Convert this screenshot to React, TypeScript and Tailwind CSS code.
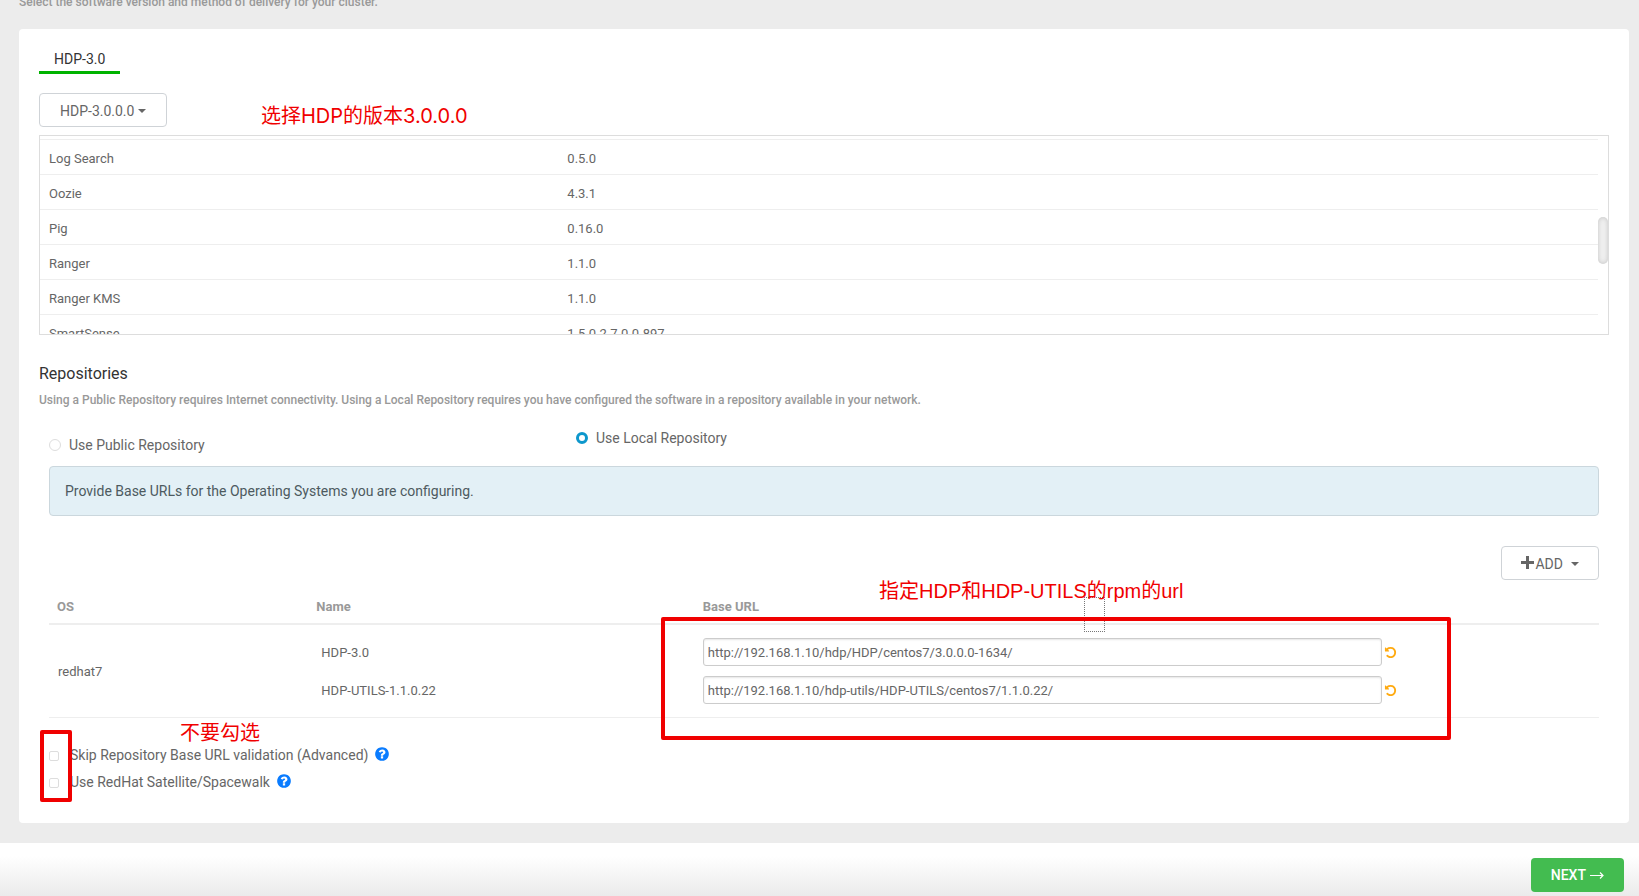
import { useState } from 'react';

const services = [
  ['Log Search', '0.5.0'],
  ['Oozie', '4.3.1'],
  ['Pig', '0.16.0'],
  ['Ranger', '1.1.0'],
  ['Ranger KMS', '1.1.0'],
  ['SmartSense', '1.5.0.2.7.0.0-897'],
];

const initialRepos = [
  { name: 'HDP-3.0', url: 'http://192.168.1.10/hdp/HDP/centos7/3.0.0.0-1634/' },
  { name: 'HDP-UTILS-1.1.0.22', url: 'http://192.168.1.10/hdp-utils/HDP-UTILS/centos7/1.1.0.22/' },
];

function Caret() {
  return (
    <svg className="h-1 w-2" viewBox="0 0 8 4" fill="currentColor" aria-hidden="true">
      <path d="M0 0h8L4 4z" />
    </svg>
  );
}

function UndoIcon() {
  return (
    <svg className="size-[13px]" viewBox="0 0 1792 1792" fill="currentColor" aria-hidden="true">
      <path d="M1664 896q0 156-61 298t-164 245-245 164-298 61q-172 0-327-72.5t-264-204.5q-7-10-6.5-22.5t8.5-20.5l137-138q10-9 25-9 16 2 23 12 73 95 179 147t225 52q104 0 198.5-40.5t163.5-109.5 109.5-163.5 40.5-198.5-40.5-198.5-109.5-163.5-163.5-109.5-198.5-40.5q-98 0-188 35.5t-160 101.5l137 138q31 30 14 69-17 40-59 40h-448q-26 0-45-19t-19-45v-448q0-42 40-59 39-17 69 14l130 129q107-101 244.5-156.5t284.5-55.5q156 0 298 61t245 164 164 245 61 298z" />
    </svg>
  );
}

function HelpIcon() {
  return (
    <svg className="size-4 text-[#0a7cff]" viewBox="0 0 1792 1792" fill="currentColor" aria-hidden="true">
      <path d="M1024 1376v-192q0-14-9-23t-23-9h-192q-14 0-23 9t-9 23v192q0 14 9 23t23 9h192q14 0 23-9t9-23zm256-672q0-88-55.5-163t-138.5-116-170-41q-243 0-371 213-15 24 8 42l132 100q7 6 19 6 16 0 25-12 53-68 86-92 34-24 86-24 48 0 85.5 26t37.5 59q0 38-20 61t-68 45q-63 28-115.5 86.5t-52.5 125.5v36q0 14 9 23t23 9h192q14 0 23-9t9-23q0-19 21.5-49.5t54.5-49.5q32-18 49-28.5t46-35 44.5-48 28-60.5 12.5-81zm384 192q0 209-103 385.5t-279.5 279.5-385.5 103-385.5-103-279.5-279.5-103-385.5 103-385.5 279.5-279.5 385.5-103 385.5 103 279.5 279.5 103 385.5z" />
    </svg>
  );
}

const noteClass = 'pointer-events-none absolute whitespace-nowrap text-[20px] leading-7 text-[#f00000]';

const radioClass =
  'size-3 appearance-none rounded-full border border-[#dddddd] bg-white checked:border-[3px] checked:border-[#0d97cc]';

const checkClass =
  'size-2.5 appearance-none rounded-[2px] border border-[#dddddd] bg-white checked:bg-[#0d97cc]';

export default function App() {
  const [source, setSource] = useState('local');
  const [repos, setRepos] = useState(initialRepos);

  return (
    <div className="flex min-h-screen flex-col bg-[#ececec] font-[Roboto,'Noto_Sans_CJK_SC',sans-serif] text-[14px] text-[#666666]">
      <header className="h-[29px] overflow-hidden pl-[19px]">
        <p className="-mt-1.5 text-[12px] leading-4 font-medium text-[#999999]">
          Select the software version and method of delivery for your cluster.
        </p>
      </header>

      <main className="mr-2.5 mb-5 ml-[19px] rounded-sm bg-white px-5 pt-5 pb-[27px]">
        <nav className="flex">
          <a href="#hdp" className="border-b-[3px] border-[#00b300] px-[15px] pb-0.5 leading-5 text-[#333333]">
            HDP-3.0
          </a>
        </nav>

        <div className="relative mt-[19px]">
          <button type="button" className="flex h-[34px] items-center gap-1 rounded-sm border border-[#cfd3d7] px-5 pt-0.5">
            HDP-3.0.0.0
            <Caret />
          </button>
          <span className={noteClass + " top-[9px] left-[222px] font-['Inter','Noto_Sans_CJK_SC',sans-serif]"}>
            选择HDP的版本3.0.0.0
          </span>
        </div>

        <div className="relative mt-2 h-[200px] overflow-hidden border border-[#dddddd] pt-[3px] pr-2.5">
          <table className="w-full table-fixed border-collapse text-[13px]">
            <tbody>
              {services.map(([name, version]) => (
                <tr key={name} className="h-[35px] border-t border-[#eeeeee]">
                  <td className="w-1/3 px-[9px] pt-[3px] pb-0">{name}</td>
                  <td className="px-2 pt-[3px] pb-0">{version}</td>
                </tr>
              ))}
            </tbody>
          </table>
          <div className="absolute top-[81px] right-0 h-[47px] w-2.5 rounded-full bg-[#f0f0f0] shadow-[inset_0_0_5px_#c4c4c4]" />
        </div>

        <h2 className="mt-[29px] text-[16px] leading-5 text-[#333333]">Repositories</h2>
        <p className="mt-2 text-[12px] leading-4 font-medium text-[#999999]">
          Using a Public Repository requires Internet connectivity. Using a Local Repository requires you have configured
          the software in a repository available in your network.
        </p>

        <div className="px-2.5">
          <div className="mt-[19px] flex h-[29px] leading-[22px]">
            <label className="flex w-[34%] items-center gap-2 self-end">
              <input
                type="radio"
                name="source"
                className={radioClass}
                checked={source === 'public'}
                onChange={() => setSource('public')}
              />
              Use Public Repository
            </label>
            <label className="flex items-center gap-2 self-start">
              <input
                type="radio"
                name="source"
                className={radioClass}
                checked={source === 'local'}
                onChange={() => setSource('local')}
              />
              Use Local Repository
            </label>
          </div>

          <div className="mt-2.5 flex h-[50px] items-center rounded-sm border border-[#cbd7dd] bg-[#e3f0f6] px-[15px] text-[#4d5a60]">
            Provide Base URLs for the Operating Systems you are configuring.
          </div>

          <div className="mt-[30px] flex justify-end">
            <button type="button" className="flex h-[34px] items-center rounded-sm border border-[#cfd3d7] px-[19px] pt-0.5">
              <svg className="mb-1 size-[13px]" viewBox="0 0 13 13" fill="currentColor" aria-hidden="true">
                <path d="M5 0h3v5h5v3H8v5H5V8H0V5h5z" />
              </svg>
              <span className="mr-2 ml-px">ADD</span>
              <Caret />
            </button>
          </div>

          <div className="relative mt-[15px]">
            <table className="w-full table-fixed border-collapse text-left text-[13px]">
              <thead>
                <tr className="h-[29px] border-b-2 border-[#eeeeee] text-[#999999]">
                  <th className="w-1/6 px-2 pt-0 pb-1 font-bold">OS</th>
                  <th className="w-1/4 px-[9px] pt-0 pb-1 font-bold">Name</th>
                  <th className="px-2 pt-0 pb-1 font-bold">Base URL</th>
                </tr>
              </thead>
              <tbody>
                <tr className="border-b border-[#eeeeee]">
                  <td className="px-[9px] pt-0.5">redhat7</td>
                  <td className="px-[14px] pt-[14px] pb-3">
                    {repos.map((repo, i) => (
                      <label key={repo.name} htmlFor={`repo-${i}`} className="mb-2.5 block h-7 leading-7 last:mb-0">
                        {repo.name}
                      </label>
                    ))}
                  </td>
                  <td className="px-2 py-[13px]">
                    {repos.map((repo, i) => (
                      <div key={repo.name} className="mb-2.5 flex items-center gap-0.5 last:mb-0">
                        <input
                          id={`repo-${i}`}
                          type="text"
                          value={repo.url}
                          onChange={(e) =>
                            setRepos(repos.map((r, j) => (j === i ? { ...r, url: e.target.value } : r)))
                          }
                          className="h-7 w-[76.5%] rounded-[3px] border border-[#cccccc] bg-white px-1 shadow-[inset_0_1px_2px_rgba(0,0,0,0.1)] outline-none"
                        />
                        <button
                          type="button"
                          aria-label="Undo"
                          className="text-[#ffaa10]"
                          onClick={() => setRepos(repos.map((r, j) => (j === i ? initialRepos[i] : r)))}
                        >
                          <UndoIcon />
                        </button>
                      </div>
                    ))}
                  </td>
                </tr>
              </tbody>
            </table>
            <div className="pointer-events-none absolute top-0.5 left-[1035px] h-[35px] w-[21px] border border-dotted border-[#777777]" />
            <div className="pointer-events-none absolute top-[22px] left-[612px] h-[123px] w-[790px] rounded-[2px] border-4 border-[#f00000]" />
            <span className={noteClass + " -top-[18px] left-[830px] font-['Liberation_Sans','Noto_Sans_CJK_SC',sans-serif]"}>
              指定HDP和HDP-UTILS的rpm的url
            </span>
          </div>

          <div className="relative mt-6">
            <div className="flex h-[27px] items-center">
              <label className="flex items-center gap-[11px]">
                <input type="checkbox" className={checkClass} />
                Skip Repository Base URL validation (Advanced)
              </label>
              <button type="button" aria-label="About skipping validation" className="mb-1 ml-1.5">
                <HelpIcon />
              </button>
            </div>
            <div className="flex h-[27px] items-center">
              <label className="flex items-center gap-[11px]">
                <input type="checkbox" className={checkClass} />
                Use RedHat Satellite/Spacewalk
              </label>
              <button type="button" aria-label="About RedHat Satellite" className="mb-1 ml-1.5">
                <HelpIcon />
              </button>
            </div>
            <div className="pointer-events-none absolute -top-3 -left-[9px] h-[72px] w-8 rounded-[2px] border-4 border-[#f00000]" />
            <span className={noteClass + ' -top-[23px] left-[131px]'}>不要勾选</span>
          </div>
        </div>
      </main>

      <footer className="flex grow items-start justify-end bg-linear-to-b from-white from-25% to-[#ebebeb] pt-[15px] pr-[15px] pb-[3px]">
        <button
          type="button"
          className="flex h-[34px] items-center gap-1 rounded-sm bg-[#43bc50] px-5 font-medium text-white"
        >
          NEXT
          <svg className="h-[7px] w-3.5" viewBox="0 0 14 7" fill="none" stroke="currentColor" aria-hidden="true">
            <path d="M0 3.5h13M10 .5l3 3-3 3" strokeWidth="1.2" />
          </svg>
        </button>
      </footer>
    </div>
  );
}
